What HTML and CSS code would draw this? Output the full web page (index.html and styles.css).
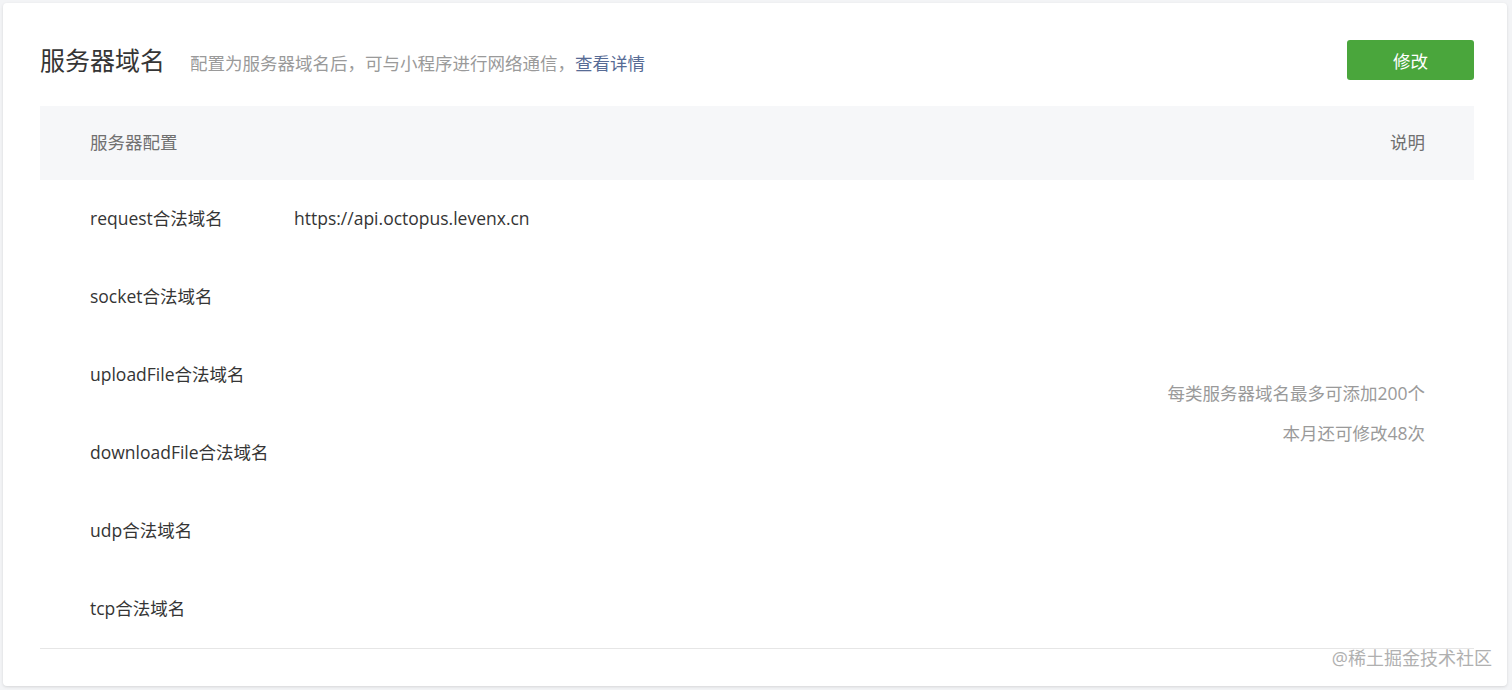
FILE: index.html
```html
<!DOCTYPE html>
<html lang="zh-CN">
<head>
<meta charset="utf-8">
<title>服务器域名</title>
<link rel="stylesheet" href="styles.css">
</head>
<body>
<div class="card">
  <div class="head">
    <div class="head-left">
      <h2 class="title">服务器域名</h2>
      <span class="desc">配置为服务器域名后，可与小程序进行网络通信，<a class="link" href="#">查看详情</a></span>
    </div>
    <button class="btn">修改</button>
  </div>
  <div class="table">
    <div class="thead">
      <div class="th">服务器配置</div>
      <div class="th th-right">说明</div>
    </div>
    <div class="tbody">
      <div class="rows">
        <div class="row"><div class="label">request合法域名</div><div class="value">https://api.octopus.levenx.cn</div></div>
        <div class="row"><div class="label">socket合法域名</div><div class="value"></div></div>
        <div class="row"><div class="label">uploadFile合法域名</div><div class="value"></div></div>
        <div class="row"><div class="label">downloadFile合法域名</div><div class="value"></div></div>
        <div class="row"><div class="label">udp合法域名</div><div class="value"></div></div>
        <div class="row"><div class="label">tcp合法域名</div><div class="value"></div></div>
      </div>
      <div class="note">
        <p>每类服务器域名最多可添加200个</p>
        <p>本月还可修改48次</p>
      </div>
    </div>
  </div>
  <div class="watermark">@稀土掘金技术社区</div>
</div>
</body>
</html>
```

FILE: styles.css
```css
html, body {
  margin: 0;
  padding: 0;
}
body {
  background: #f3f4f6;
  font-family: "Open Sans", "Noto Sans CJK SC", sans-serif;
  color: #353535;
  width: 1512px;
  height: 690px;
  overflow: hidden;
}
.card {
  position: relative;
  margin: 3px 5px 0 3px;
  height: 683px;
  box-sizing: border-box;
  background: #fff;
  border-radius: 4px;
  box-shadow: 0 1px 3px rgba(0, 0, 0, 0.12);
  padding: 37px 33px 0 37px;
}
.head {
  display: flex;
  align-items: center;
  justify-content: space-between;
  height: 40px;
}
.head-left {
  display: flex;
  align-items: baseline;
  margin-top: -3px;
}
.title {
  margin: 0;
  font-size: 25px;
  font-weight: normal;
  color: #353535;
}
.desc {
  margin-left: 25px;
  font-size: 17.5px;
  color: #9a9a9a;
}
.link {
  color: #576b95;
  text-decoration: none;
}
.btn {
  width: 127px;
  height: 40px;
  border: none;
  border-radius: 3px;
  background: #4aa63c;
  color: #fff;
  font-family: inherit;
  font-size: 17.5px;
  padding: 0;
}
.table {
  margin-top: 26px;
}
.thead {
  display: flex;
  justify-content: space-between;
  align-items: center;
  height: 74px;
  background: #f6f7f9;
  padding: 0 49px 0 50px;
}
.th {
  font-size: 17.5px;
  color: #707070;
  margin-top: -3px;
}
.tbody {
  display: flex;
  border-bottom: 1px solid #e6e6e6;
}
.rows {
  flex: 1;
}
.row {
  display: flex;
  align-items: center;
  height: 78px;
  padding-left: 50px;
  font-size: 17.5px;
  color: #353535;
}
.label {
  width: 204px;
  margin-top: -3px;
}
.value {
  margin-top: -3px;
}
.note {
  display: flex;
  flex-direction: column;
  justify-content: center;
  align-items: flex-end;
  padding-right: 49px;
  font-size: 17.5px;
  color: #9a9a9a;
  margin-top: -2px;
}
.note p {
  margin: 0;
  line-height: 40px;
}
.watermark {
  position: absolute;
  right: 15px;
  bottom: 16px;
  font-size: 18px;
  color: #a8a8a8;
  opacity: 0.9;
}
```
